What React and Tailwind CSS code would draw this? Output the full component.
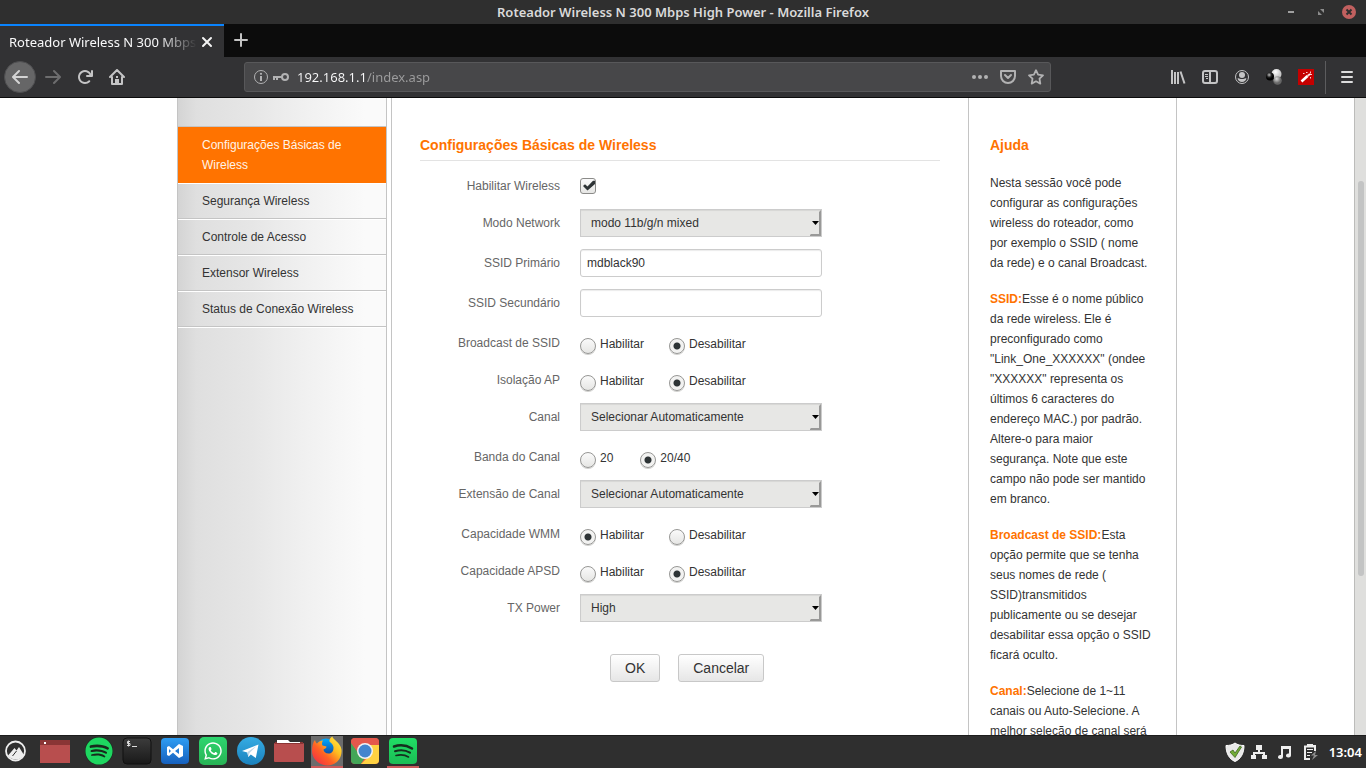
import { FaSpotify, FaWhatsapp } from "react-icons/fa";

const SIDE_LINKS = [
  "Segurança Wireless",
  "Controle de Acesso",
  "Extensor Wireless",
  "Status de Conexão Wireless",
];

const HELP = [
  { term: "", text: "Nesta sessão você pode configurar as configurações wireless do roteador, como por exemplo o SSID ( nome da rede) e o canal Broadcast." },
  { term: "SSID:", text: "Esse é o nome público da rede wireless. Ele é preconfigurado como \"Link_One_XXXXXX\" (ondee \"XXXXXX\" representa os últimos 6 caracteres do endereço MAC.) por padrão. Altere-o para maior segurança. Note que este campo não pode ser mantido em branco." },
  { term: "Broadcast de SSID:", text: "Esta opção permite que se tenha seus nomes de rede ( SSID)transmitidos publicamente ou se desejar desabilitar essa opção o SSID ficará oculto." },
  { term: "Canal:", text: "Selecione de 1~11 canais ou Auto-Selecione. A melhor seleção de canal será" },
];

function IconButton({ label, className = "", children }) {
  return (
    <button type="button" aria-label={label} className={"flex shrink-0 items-center justify-center " + className}>
      {children}
    </button>
  );
}

function TitleBar() {
  return (
    <header className="relative flex h-6 shrink-0 items-center justify-center bg-[#2f2f2f] font-['Noto_Sans',sans-serif] text-[13px] font-semibold text-[#dadada]">
      <h1 className="leading-[26px]">Roteador Wireless N 300 Mbps High Power - Mozilla Firefox</h1>
      <div className="absolute right-2 top-0 flex h-6 items-center gap-[14px]">
        <IconButton label="Minimizar" className="h-4 w-4">
          <svg width="16" height="16"><rect x="6" y="7" width="6" height="2" fill="#a0a0a0" /></svg>
        </IconButton>
        <IconButton label="Restaurar" className="h-4 w-4">
          <svg width="16" height="16" fill="#8c8c8c"><path d="M8 5h4v4zM6 7v4h4z" /></svg>
        </IconButton>
        <IconButton label="Fechar" className="h-4 w-4">
          <svg width="16" height="16"><circle cx="7" cy="8" r="7" fill="#c1605f" /><path d="M4.500 5.500l5 5m0-5l-5 5" stroke="#2f2f2f" strokeWidth="2" /></svg>
        </IconButton>
      </div>
    </header>
  );
}

function TabBar() {
  return (
    <div className="flex h-[33px] shrink-0 bg-[#0c0c0c] font-['Noto_Sans',sans-serif] text-[13px]">
      <div className="flex w-56 items-center border-t-2 border-[#0a84ff] bg-[#323234] pl-[9px] text-[#f9f9fa]">
        <span className="w-[188px] shrink-0 overflow-hidden whitespace-nowrap leading-5 [mask-image:linear-gradient(to_right,black_150px,transparent_188px)]">
          Roteador Wireless N 300 Mbps
        </span>
        <IconButton label="Fechar aba" className="h-5 w-5">
          <svg width="12" height="12" stroke="#f4f4f4" strokeWidth="2" strokeLinecap="round"><path d="M2 2l8 8m0-8l-8 8" /></svg>
        </IconButton>
      </div>
      <IconButton label="Nova aba" className="ml-px h-8 w-8">
        <svg width="16" height="16" stroke="#c4c4c4" strokeWidth="2" strokeLinecap="round"><path d="M8 2v12M2 8h12" /></svg>
      </IconButton>
    </div>
  );
}

function NavBar() {
  return (
    <div className="flex h-[41px] shrink-0 items-center border-b border-[#0c0c0c] bg-[#323234] font-['Noto_Sans',sans-serif] text-[13px] text-[#c4c4c5]">
      <div className="flex w-[244px] shrink-0 items-center pl-1">
        <IconButton label="Voltar" className="h-8 w-8 rounded-full border border-[#4e4e50] bg-[#666667]">
          <svg width="16" height="16" fill="#d4d4d4"><path d="M15 7H3.414l4.293-4.293a1 1 0 0 0-1.414-1.414l-6 6a1 1 0 0 0 0 1.414l6 6a1 1 0 0 0 1.414-1.414L3.414 9H15a1 1 0 0 0 0-2z" /></svg>
        </IconButton>
        <IconButton label="Avançar" className="ml-px h-8 w-8">
          <svg width="16" height="16" fill="#6d6d6e"><path transform="translate(16 0) scale(-1 1)" d="M15 7H3.414l4.293-4.293a1 1 0 0 0-1.414-1.414l-6 6a1 1 0 0 0 0 1.414l6 6a1 1 0 0 0 1.414-1.414L3.414 9H15a1 1 0 0 0 0-2z" /></svg>
        </IconButton>
        <IconButton label="Recarregar" className="h-8 w-8">
          <svg width="16" height="16" fill="currentColor"><path d="M15 1a1 1 0 0 0-1 1v2.418A6.995 6.995 0 1 0 8 15a6.954 6.954 0 0 0 4.950-2.050 1 1 0 0 0-1.414-1.414A5.019 5.019 0 1 1 12.549 6H10a1 1 0 0 0 0 2h5a1 1 0 0 0 1-1V2a1 1 0 0 0-1-1z" /></svg>
        </IconButton>
        <IconButton label="Início" className="h-8 w-8">
          <svg width="16" height="16" fill="none" stroke="currentColor" strokeWidth="2" strokeLinecap="round" strokeLinejoin="round"><path d="M1 8l7-7 7 7M3 8v7h10V8" /><path d="M7 15v-4h2v4M7 8h2" strokeLinecap="butt" strokeLinejoin="miter" /></svg>
        </IconButton>
      </div>
      <form className="flex h-[30px] min-w-0 flex-1 items-center rounded-[3px] border border-[#58585a] bg-[#474749] pl-2" onSubmit={(e) => e.preventDefault()}>
        <IconButton label="Informações do site" className="h-4 w-4 text-[#b2b2b3]">
          <svg width="16" height="16" fill="none" stroke="currentColor"><circle cx="8" cy="8" r="6.500" /><path d="M8 7v5" strokeWidth="2" /><circle cx="8" cy="4.800" r="1.100" fill="currentColor" stroke="none" /></svg>
        </IconButton>
        <IconButton label="Senha salva" className="ml-1 h-4 w-4 text-[#b2b2b3]">
          <svg width="16" height="16" fill="none" stroke="currentColor" strokeWidth="2"><circle cx="12" cy="8" r="3" /><path d="M0 8h9M1 8v3M4 8v3" /></svg>
        </IconButton>
        <input
          type="text"
          aria-label="Endereço"
          defaultValue="192.168.1.1/index.asp"
          className="ml-2 min-w-0 flex-1 bg-[linear-gradient(to_right,#f9f9fa_70px,#9d9d9e_70px)] bg-clip-text leading-5 text-transparent outline-none"
        />
        <div className="flex items-center gap-3 pr-[6px] text-[#b2b2b3]">
          <IconButton label="Ações da página" className="h-4 w-4">
            <svg width="16" height="16" fill="currentColor"><circle cx="2" cy="8" r="2" /><circle cx="8" cy="8" r="2" /><circle cx="14" cy="8" r="2" /></svg>
          </IconButton>
          <IconButton label="Salvar no Pocket" className="h-4 w-4">
            <svg width="16" height="16" fill="none" stroke="currentColor" strokeWidth="2" strokeLinecap="round" strokeLinejoin="round"><path d="M1 2h14v5a7 7 0 0 1-14 0zM5 6l3 3 3-3" /></svg>
          </IconButton>
          <IconButton label="Adicionar aos favoritos" className="h-4 w-4">
            <svg width="16" height="16" fill="none" stroke="currentColor" strokeWidth="1.800" strokeLinejoin="round"><path d="M8 1.200l2.100 4.400 4.900.7-3.500 3.400.8 4.900L8 12.300l-4.300 2.300.8-4.900L1 6.300l4.900-.7z" /></svg>
          </IconButton>
        </div>
      </form>
      <div className="flex w-[315px] shrink-0 items-center justify-end gap-4 pr-[11px]">
        <IconButton label="Biblioteca" className="h-4 w-4">
          <svg width="16" height="16" fill="none" stroke="currentColor" strokeWidth="2"><path d="M2 1v14M5 3v12M8 3v12M10.500 2.500l4 12" /></svg>
        </IconButton>
        <IconButton label="Painéis" className="h-4 w-4">
          <svg width="16" height="16" fill="none" stroke="currentColor"><rect x="1" y="2" width="14" height="12" rx="2" strokeWidth="2" /><path d="M8 2v12" strokeWidth="2" /><path d="M3 5.500h3M3 7.500h3M4 9.500h2" /></svg>
        </IconButton>
        <IconButton label="Conta" className="h-4 w-4">
          <svg width="16" height="16"><circle cx="8" cy="8" r="6.500" fill="none" stroke="currentColor" /><circle cx="8" cy="6" r="3" fill="currentColor" /><path d="M3.500 9.500c1.500-1 2 .5 4.500.5s3-1.500 4.500-.5A5 5 0 0 1 8 13a5 5 0 0 1-4.500-3.500z" fill="currentColor" /></svg>
        </IconButton>
        <IconButton label="Extensão de proxy" className="h-4 w-4">
          <svg width="16" height="16">
            <defs>
              <radialGradient id="dk" cx=".4" cy=".3"><stop stopColor="#bbb" /><stop offset=".6" stopColor="#222" /><stop offset="1" stopColor="#000" /></radialGradient>
              <radialGradient id="lt" cx=".4" cy=".3"><stop stopColor="#fff" /><stop offset="1" stopColor="#c8c8c8" /></radialGradient>
              <radialGradient id="md" cx=".4" cy=".3"><stop stopColor="#ddd" /><stop offset="1" stopColor="#666" /></radialGradient>
            </defs>
            <circle cx="10.500" cy="5" r="5" fill="url(#lt)" /><circle cx="11.500" cy="11.500" r="4.300" fill="url(#md)" /><circle cx="4" cy="7.500" r="4" fill="url(#dk)" />
          </svg>
        </IconButton>
        <IconButton label="Varinha" className="h-4 w-4 bg-[#c50000]">
          <svg width="16" height="16" stroke="#fff"><path d="M3.500 12.500l6-5.500" strokeWidth="2.600" /><path d="M9.500 7l2.500-2" strokeWidth="2" stroke="#ffd0d0" /><path d="M5 4.500h1.500M8 3.500h1.500M12.500 2.500v2M12.500 8v1.500M11 5.500h3" strokeWidth=".8" /></svg>
        </IconButton>
        <div className="-ml-[5px] -mr-[3px] h-[33px] w-px bg-[#5c5c5e]" />
        <IconButton label="Menu" className="h-4 w-4">
          <svg width="16" height="16" stroke="#dcdcdc" strokeWidth="2" strokeLinecap="round"><path d="M3 3h10M3 8h10M3 13h10" /></svg>
        </IconButton>
      </div>
    </div>
  );
}

function Field({ label, htmlFor, compact, children }) {
  return (
    <div className={"mb-3 flex gap-5 " + (compact ? "h-[25px]" : "h-7")}>
      <label htmlFor={htmlFor} className="w-[140px] shrink-0 text-right leading-7 text-[#666]">{label}</label>
      {children}
    </div>
  );
}

function SelectField({ id, label, value }) {
  return (
    <Field label={label} htmlFor={id}>
      <div className="relative h-7 w-[242px]">
        <select id={id} defaultValue={value} className="block h-7 w-full appearance-none border border-[#ccc] bg-[#e7e7e5] pl-[10px] pr-4 text-[#333] shadow-[inset_0_1px_1px_rgba(0,0,0,0.07)] outline-none">
          <option>{value}</option>
        </select>
        <svg className="pointer-events-none absolute bottom-px right-0" width="12" height="26">
          <path d="M-1 26l2-2h8V2l2-2v26z" fill="#999998" />
          <path d="M2 11h7L5.500 15z" fill="#000" />
        </svg>
      </div>
    </Field>
  );
}

function TextField({ id, label, value }) {
  return (
    <Field label={label} htmlFor={id}>
      <input id={id} type="text" defaultValue={value} className="h-7 w-[242px] rounded-[3px] border border-[#ccc] bg-white px-[6px] text-[#333] shadow-[inset_0_1px_1px_rgba(0,0,0,0.08)] outline-none" />
    </Field>
  );
}

function RadioField({ name, label, options, selected, gap = "gap-[25px]" }) {
  return (
    <Field label={label} compact>
      <div role="radiogroup" aria-label={label} className={"flex pt-[5px] " + gap}>
        {options.map((option) => (
          <label key={option} className="flex gap-1 leading-5 text-[#333]">
            <input
              type="radio"
              name={name}
              defaultChecked={option === selected}
              className="mt-1 h-4 w-4 appearance-none rounded-full border border-[#979795] bg-linear-to-b from-[#fafafa] to-[#e6e6e4] shadow-[0_1px_0_#d0d0ce] checked:bg-[radial-gradient(circle,#2e3436_3px,#f2f2f1_4px)]"
            />
            {option}
          </label>
        ))}
      </div>
    </Field>
  );
}

function Sidebar() {
  return (
    <nav className="w-[210px] shrink-0 border-x border-[#c4c4c4] bg-[linear-gradient(to_right,#d4d4d4,#dfdfdf_9%,#e6e6e6_35%,#f0f0f0_60%,#fafafa_90%)]">
      <div className="h-[29px] border-b border-[#c4c4c4]" />
      <a href="#basico" className="block bg-[#ff7300] px-6 py-2 text-[#fff3e8]">Configurações Básicas de Wireless</a>
      {SIDE_LINKS.map((item) => (
        <a key={item} href="#item" className="block border-b border-t border-b-[#c4c4c4] border-t-white px-6 py-[7px] text-[#333]">{item}</a>
      ))}
      <div className="h-px bg-white" />
    </nav>
  );
}

function RouterPage() {
  const onOff = ["Habilitar", "Desabilitar"];
  const auto = "Selecionar Automaticamente";
  return (
    <div className="mx-auto flex w-[1000px] font-['Liberation_Sans',Arial,sans-serif] text-xs leading-5 text-[#333]">
      <Sidebar />
      <main className="ml-1 min-w-0 flex-1 border-l border-[#c4c4c4] pl-7 pr-7 pt-[37px]">
        <h2 className="mb-[11px] border-b border-[#e3e3e3] pb-[5px] text-sm font-bold leading-5 text-[#ff7300]">Configurações Básicas de Wireless</h2>
        <form onSubmit={(e) => e.preventDefault()}>
          <Field label="Habilitar Wireless" htmlFor="enable" compact>
            <div className="relative mt-[6px] h-4 w-4">
              <input id="enable" type="checkbox" defaultChecked className="peer block h-4 w-4 appearance-none rounded-[3px] border border-[#8b8b89] bg-linear-to-b from-[#fbfbfb] to-[#e6e6e4]" />
              <svg className="pointer-events-none absolute inset-0 hidden peer-checked:block" width="16" height="16"><path d="M3 8l2-1.700 2.500 2.200L13 2.800h2V6l-7.500 6.500z" fill="#2e3436" /></svg>
            </div>
          </Field>
          <SelectField id="mode" label="Modo Network" value="modo 11b/g/n mixed" />
          <TextField id="ssid1" label="SSID Primário" value="mdblack90" />
          <TextField id="ssid2" label="SSID Secundário" value="" />
          <RadioField name="broadcast" label="Broadcast de SSID" options={onOff} selected="Desabilitar" />
          <RadioField name="isolation" label="Isolação AP" options={onOff} selected="Desabilitar" />
          <SelectField id="channel" label="Canal" value={auto} />
          <RadioField name="band" label="Banda do Canal" options={["20", "20/40"]} selected="20/40" gap="gap-[27px]" />
          <SelectField id="ext" label="Extensão de Canal" value={auto} />
          <RadioField name="wmm" label="Capacidade WMM" options={onOff} selected="Habilitar" />
          <RadioField name="apsd" label="Capacidade APSD" options={onOff} selected="Desabilitar" />
          <SelectField id="tx" label="TX Power" value="High" />
          <div className="mt-8 flex gap-[18px] pl-[190px] text-sm">
            <button type="submit" className="h-7 rounded-[3px] border border-[#c8c8c8] bg-linear-to-b from-white to-[#e6e6e6] px-[14px]">OK</button>
            <button type="button" className="h-7 rounded-[3px] border border-[#c8c8c8] bg-linear-to-b from-white to-[#e6e6e6] px-[14px]">Cancelar</button>
          </div>
        </form>
      </main>
      <aside className="w-[209px] shrink-0 border-x border-[#c4c4c4] pl-[21px] pr-[23px] pt-[37px]">
        <h2 className="mb-[18px] text-sm font-bold leading-5 text-[#ff7300]">Ajuda</h2>
        {HELP.map(({ term, text }) => (
          <p key={text} className="mb-4">{term && <b className="text-[#ff7300]">{term}</b>}{text}</p>
        ))}
      </aside>
    </div>
  );
}

function Task({ label, state = "", children }) {
  return (
    <button type="button" aria-label={label} className={"flex h-8 w-8 items-center justify-center border-b-2 " + (state || "border-transparent")}>
      {children}
    </button>
  );
}

function Taskbar() {
  return (
    <footer className="flex h-[33px] shrink-0 items-center justify-between border-t border-[#1d1d1d] bg-[#2f2f2f]">
      <div className="flex items-center">
        <Task label="Menu">
          <svg width="22" height="22"><circle cx="10.500" cy="11" r="9.500" fill="#2f2f2f" stroke="#eee" strokeWidth="1.800" /><path d="M3 15.500l6.500-7.500 2 2.500 2.500-3.500 5 8c-1.500 2.500-4.500 4.500-8 4.500s-6.500-1.500-8-4z" fill="#eee" /><path d="M7.500 16l4-5" stroke="#2f2f2f" strokeWidth="1" /></svg>
        </Task>
        <div className="ml-[7px] mr-3">
          <Task label="Arquivos">
            <svg width="30" height="24"><path d="M0 1h30v23H0z" fill="#b84e4e" /><path d="M0 1h30v5H0z" fill="#8a3535" /><path d="M4 3h2v2H4z" fill="#fff" /></svg>
          </Task>
        </div>
        <div className="flex gap-[6px]">
          <Task label="Spotify"><span className="rounded-full bg-[#182a1d]"><FaSpotify size={28} color="#1ed760" /></span></Task>
          <Task label="Terminal">
            <svg width="30" height="28"><defs><linearGradient id="tm" x2="0" y2="1"><stop stopColor="#3c3c3c" /><stop offset="1" stopColor="#191919" /></linearGradient></defs><rect x="1" y="1" width="28" height="26" rx="4" fill="url(#tm)" stroke="#111" /><path d="M8 4.500H5.500v2H8v2H5M6.500 3.500v6M10 9.500h5" fill="none" stroke="#ddd" /></svg>
          </Task>
          <Task label="Visual Studio Code">
            <svg width="28" height="28"><defs><linearGradient id="vs" x2="0" y2="1"><stop stopColor="#2e9df3" /><stop offset="1" stopColor="#1660bd" /></linearGradient></defs><rect y="1" width="28" height="26" rx="4" fill="url(#vs)" /><path fillRule="evenodd" fill="#fff" d="M6 10l2-1 4 3.200L18 7l4 2v10l-4 2-6-5.200L8 19l-2-1zM8 12v4l2-2zM18 11l-4 3 4 3z" /></svg>
          </Task>
          <Task label="WhatsApp"><span className="flex h-7 w-7 items-center justify-center rounded-[5px] bg-linear-to-b from-[#2dd66f] to-[#28b355]"><FaWhatsapp size={20} color="#fff" /></span></Task>
          <Task label="Telegram">
            <svg width="28" height="28"><defs><linearGradient id="tg" x2="0" y2="1"><stop stopColor="#35ace3" /><stop offset="1" stopColor="#1b82bd" /></linearGradient></defs><circle cx="14" cy="14" r="14" fill="url(#tg)" /><path d="M5 14l16.500-6.500L18.800 21l-5-3.500-2.500 2.500-1-4.500z" fill="#fff" /><path d="M10.500 15l9-6-7 7-1.200 4z" fill="#c2d8e8" /></svg>
          </Task>
          <Task label="Pasta">
            <svg width="30" height="24"><path d="M1 3h28v3H1z" fill="#8a3535" /><path d="M3 1h11l2 2h10v1H3z" fill="#fff" /><rect y="4" width="30" height="19" rx="1" fill="#b84e4e" /><path d="M1 4h28v1H1z" fill="#8a3535" /></svg>
          </Task>
          <Task label="Firefox" state="border-[#c95b5b] bg-[#6c6c6c]">
            <svg width="30" height="30">
              <defs>
                <linearGradient id="ff" x1="1" x2="0" y2="1"><stop stopColor="#fff44f" /><stop offset=".35" stopColor="#ffbd20" /><stop offset=".6" stopColor="#ff6224" /><stop offset="1" stopColor="#f0204e" /></linearGradient>
                <linearGradient id="fb" x2="0" y2="1"><stop stopColor="#00aaff" /><stop offset="1" stopColor="#16338b" /></linearGradient>
              </defs>
              <circle cx="14" cy="12.500" r="10" fill="url(#fb)" />
              <path d="M3 4c.5 2 1 3 2 3.500 1.500-2 3.500-3 6-3-1 1.500-1.500 3-.5 5l4 1c0 2-2 2-3 3 0 2 2 4 5 4s5-2 5-6c0-3-3-5-4-6-.5-2 1-4 3-5 0 3 8 6 9 13 1 9-6 16-14 16S0 23 0 15C0 10 1 6 3 4z" fill="url(#ff)" />
            </svg>
          </Task>
          <Task label="Chrome">
            <svg width="28" height="28"><defs><clipPath id="cc"><rect y="1" width="28" height="26" rx="4" /></clipPath></defs><g clipPath="url(#cc)"><path d="M0 0h28v28H0z" fill="#e9584c" /><path d="M0 6l8 11 6 4-5 7H0z" fill="#43a657" /><path d="M14 8h14v20H9l8-8z" fill="#ffd242" /><path d="M0 0h28v8H14L8 15 0 5z" fill="#e5584c" /></g><circle cx="14" cy="14" r="8" fill="#f2f2f2" /><circle cx="14" cy="14" r="6.500" fill="#4385cd" /></svg>
          </Task>
          <Task label="Spotify em execução" state="border-[#c95b5b]">
            <svg width="28" height="28"><defs><linearGradient id="sp" x2="0" y2="1"><stop stopColor="#20de65" /><stop offset="1" stopColor="#1bbd55" /></linearGradient></defs><rect y="1" width="28" height="26" rx="4" fill="url(#sp)" /><g fill="none" stroke="#152f1e" strokeLinecap="round"><path d="M5 9.500c6-2 13-1 18 2" strokeWidth="2.500" /><path d="M6 14.200c5-1.500 11-1 15 1.500" strokeWidth="2" /><path d="M7 18.500c4-1 9-.7 12.500 1.500" strokeWidth="1.600" /></g></svg>
          </Task>
        </div>
      </div>
      <div className="flex items-center gap-[10px] pr-1 text-[#eee]">
        <IconButton label="Atualizações" className="h-5 w-5">
          <svg width="20" height="20"><path d="M10 1c2.500 2 5.500 2.500 9 2.500C19 11 16 17 10 19.500 4 17 1 11 1 3.500 4.500 3.500 7.500 3 10 1z" fill="#e9e9e9" stroke="#fff" /><path d="M5 10l3-2 2 3 5-7 1.500 1L10 15.500z" fill="#71ac36" stroke="#3d6520" strokeWidth=".8" /></svg>
        </IconButton>
        <IconButton label="Rede" className="-ml-1 h-4 w-4">
          <svg width="16" height="16" fill="currentColor"><path d="M5 1h6v5H9v2h5v3h2v4h-5v-4h1v-1H4v1h1v4H0v-4h2V8h5V6H5z" /></svg>
        </IconButton>
        <IconButton label="Som" className="h-4 w-4">
          <svg width="16" height="16" fill="currentColor"><path d="M4 2h10v9.500a2.500 2 0 1 1-2-2V5H6v8a2.500 2 0 1 1-2-2z" /></svg>
        </IconButton>
        <IconButton label="Bateria" className="h-4 w-4">
          <svg width="16" height="16"><path d="M5 2V1h4v1h3v5M7 15H2V2.500h10" fill="none" stroke="currentColor" strokeWidth="2" /><path d="M4 5h6v1H4zM4 8h5v1H4zM4 11h3v1H4z" fill="currentColor" /><path d="M13 7l-5 4.500h3L9 16l6-5h-3z" fill="#8c8c8c" /></svg>
        </IconButton>
        <time className="font-['Noto_Sans',sans-serif] text-[13px] font-semibold leading-5 text-white">13:04</time>
      </div>
    </footer>
  );
}

export default function App() {
  return (
    <div className="flex h-screen flex-col overflow-hidden bg-white">
      <TitleBar />
      <TabBar />
      <NavBar />
      <div className="flex min-h-0 flex-1 overflow-hidden">
        <div className="flex min-w-0 flex-1 overflow-hidden">
          <RouterPage />
        </div>
        <div className="flex w-3 shrink-0 flex-col items-center border-l border-[#bcbcba] bg-[#dfdfdd]">
          <div className="h-[13%] shrink-0" />
          <div className="h-[62%] w-[6px] rounded-full bg-[#c3c4c4]" />
        </div>
      </div>
      <Taskbar />
    </div>
  );
}
